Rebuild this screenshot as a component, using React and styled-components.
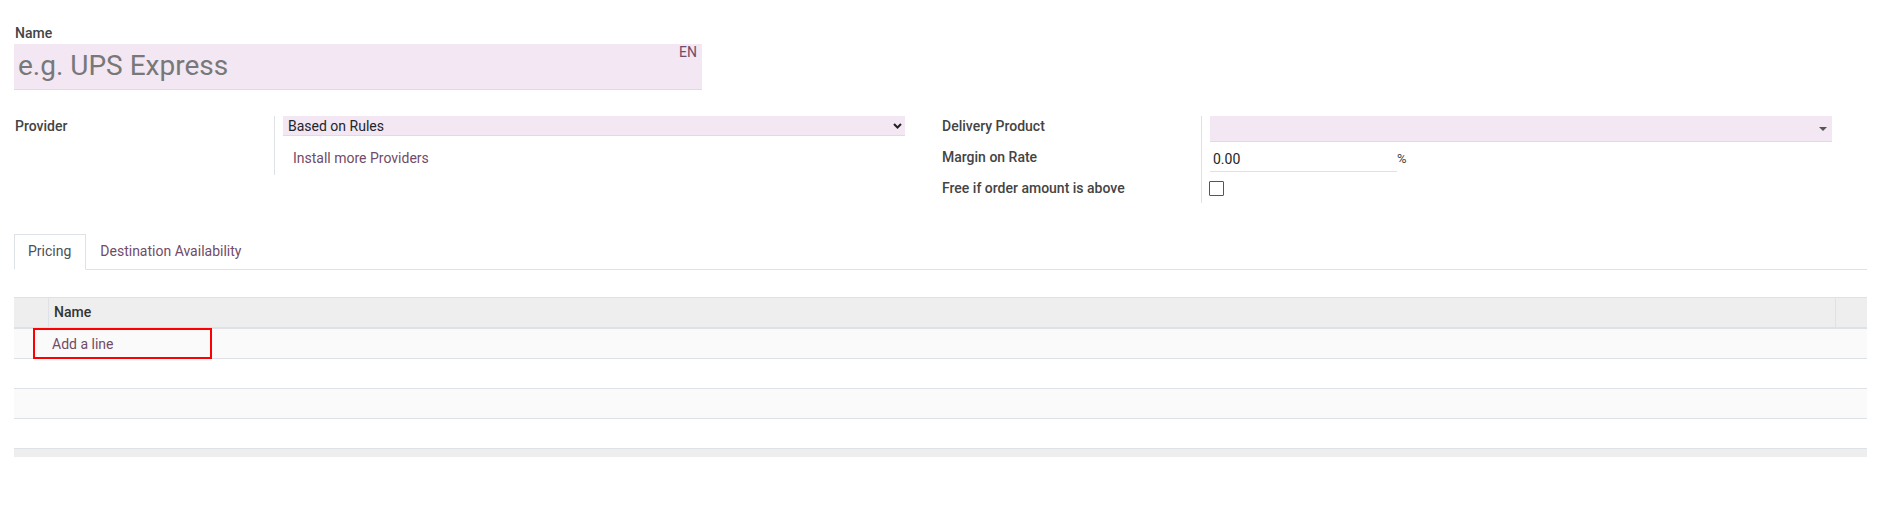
import React from "react";
import styled, { createGlobalStyle } from "styled-components";

const GlobalStyle = createGlobalStyle`
  body {
    margin: 0;
    background: #fff;
    font-family: Roboto, "Noto Sans", sans-serif;
    font-size: 14px;
    color: #212529;
  }
`;

const Sheet = styled.div`
  padding: 23px 15px 40px 14px;
`;

const FieldLabel = styled.div`
  font-weight: 500;
  font-size: 14px;
  line-height: 20px;
  color: #444;
  padding-left: 1px;
  padding-top: ${(p) => p.$top || 0}px;
  margin-bottom: ${(p) => p.$bottom || 0}px;
`;

const TitleField = styled.div`
  position: relative;
  width: 688px;
`;

const TitleInput = styled.input`
  display: block;
  width: 100%;
  height: 46px;
  box-sizing: border-box;
  border: 0;
  border-bottom: 1px solid #dcdde2;
  background: #f2e7f3;
  font-family: Roboto, sans-serif;
  font-size: 28px;
  color: #212529;
  padding: 0 4px 3px;
  outline: none;

  &::placeholder {
    color: #787878;
  }
`;

const LangBadge = styled.span`
  position: absolute;
  top: 1px;
  right: 5px;
  font-size: 14px;
  line-height: 14px;
  color: #714b67;
`;

const Groups = styled.div`
  display: grid;
  grid-template-columns: 927px 927px;
  margin-top: 26px;
  align-items: start;
`;

const Group = styled.div`
  display: grid;
  grid-template-columns: 260px 1fr;
`;

const FieldCell = styled.div`
  border-left: 1px solid #dee2e6;
  padding: 0 0 ${(p) => (p.$bottom === undefined ? 4 : p.$bottom)}px 8px;
  display: flex;
  align-items: ${(p) => p.$align || "center"};
`;

const SelectBox = styled.div`
  display: flex;
  align-items: center;
  width: 622px;
  height: ${(p) => p.$height}px;
  box-sizing: border-box;
  background: #f2e7f3;
  border-bottom: 1px solid #dcdde2;
`;

const NativeSelect = styled.select`
  flex: 1;
  appearance: none;
  border: 0;
  background: transparent;
  height: 100%;
  padding: 0 0 0 5px;
  font-family: Roboto, sans-serif;
  font-size: 14px;
  color: #212529;
  outline: none;
`;

const ComboInput = styled.input`
  flex: 1;
  border: 0;
  background: transparent;
  height: 100%;
  padding: 0 0 0 4px;
  font-family: Roboto, sans-serif;
  font-size: 14px;
  outline: none;
`;

const Chevron = styled.svg`
  margin-right: 3px;
  flex-shrink: 0;
`;

const Caret = styled.span`
  width: 0;
  height: 0;
  margin-right: 5px;
  border-left: 4px solid transparent;
  border-right: 4px solid transparent;
  border-top: 4px solid #555;
`;

const InstallLink = styled.a`
  display: block;
  padding: 8px 0 7px 10px;
  line-height: 20px;
  color: #714b67;
  text-decoration: none;
  cursor: pointer;
`;

const NumberInput = styled.input`
  width: 187px;
  height: 26px;
  box-sizing: border-box;
  border: 0;
  border-bottom: 1px solid #dee2e6;
  background: transparent;
  padding: 0 0 0 3px;
  font-family: Roboto, sans-serif;
  font-size: 14px;
  color: #212529;
  outline: none;
`;

const Unit = styled.span`
  line-height: 20px;
  font-size: 13px;
  color: #444;
`;

const Checkbox = styled.input`
  appearance: none;
  width: 15px;
  height: 15px;
  margin: 5px 0 7px -1px;
  box-sizing: border-box;
  border: 1.5px solid #555;
  border-radius: 1px;
  background: #fff;
  cursor: pointer;
`;

const TabBar = styled.div`
  display: flex;
  margin-top: 31px;
  border-bottom: 1px solid #dee2e6;
`;

const Tab = styled.div`
  padding: 6px 14px 8px 13px;
  line-height: 20px;
  border: 1px solid transparent;
  margin-bottom: -1px;
  cursor: pointer;
  color: ${(p) => (p.$active ? "#495057" : "#714b67")};
  border-color: ${(p) =>
    p.$active ? "#dee2e6 #dee2e6 #fff" : "transparent"};
  background: ${(p) => (p.$active ? "#fff" : "transparent")};
`;

const ListTable = styled.div`
  margin-top: 27px;
`;

const HeaderRow = styled.div`
  display: grid;
  grid-template-columns: 34px 1fr 32px;
  background: #eeeeee;
  border-top: 1px solid #dee2e6;
  border-bottom: 2px solid #dee2e6;
`;

const HeaderCell = styled.div`
  padding: 4px 5px 5px;
  line-height: 20px;
  font-weight: 500;
  color: #333;
  border-left: ${(p) => (p.$sep ? "1px solid #dee2e6" : "0")};
`;

const BodyRow = styled.div`
  position: relative;
  display: grid;
  grid-template-columns: 34px 1fr;
  align-items: center;
  height: 29px;
  border-bottom: 1px solid #dee2e6;
  background: ${(p) => (p.$striped ? "#fafafa" : "#fff")};
`;

const AddLine = styled.a`
  grid-column: 2;
  padding-left: 4px;
  line-height: 20px;
  color: #714b67;
  cursor: pointer;
`;

const Highlight = styled.span`
  position: absolute;
  left: 19px;
  top: -1px;
  width: 179px;
  height: 31px;
  box-sizing: border-box;
  border: 2px solid #ff0000;
  pointer-events: none;
`;

const TableFooter = styled.div`
  height: 8px;
  background: #eeeeee;
`;

export default function App() {
  return (
    <>
      <GlobalStyle />
      <Sheet>
        <FieldLabel $bottom={1}>Name</FieldLabel>
        <TitleField>
          <TitleInput placeholder="e.g. UPS Express" />
          <LangBadge>EN</LangBadge>
        </TitleField>

        <Groups>
          <Group>
            <FieldLabel>Provider</FieldLabel>
            <FieldCell>
              <SelectBox $height={20}>
                <NativeSelect defaultValue="base_on_rule">
                  <option value="fixed">Fixed Price</option>
                  <option value="base_on_rule">Based on Rules</option>
                </NativeSelect>
                <Chevron width="9" height="6" viewBox="0 0 9 6">
                  <polyline
                    points="1,1 4.5,4.5 8,1"
                    fill="none"
                    stroke="#222"
                    strokeWidth="2"
                  />
                </Chevron>
              </SelectBox>
            </FieldCell>
            <div />
            <FieldCell $bottom={0}>
              <InstallLink>Install more Providers</InstallLink>
            </FieldCell>
          </Group>

          <Group>
            <FieldLabel>Delivery Product</FieldLabel>
            <FieldCell>
              <SelectBox $height={26}>
                <ComboInput />
                <Caret />
              </SelectBox>
            </FieldCell>
            <FieldLabel $top={1}>Margin on Rate</FieldLabel>
            <FieldCell>
              <NumberInput defaultValue="0.00" />
              <Unit>%</Unit>
            </FieldCell>
            <FieldLabel $top={2}>Free if order amount is above</FieldLabel>
            <FieldCell $bottom={0} $align="flex-start">
              <Checkbox type="checkbox" />
            </FieldCell>
          </Group>
        </Groups>

        <TabBar>
          <Tab $active>Pricing</Tab>
          <Tab>Destination Availability</Tab>
        </TabBar>

        <ListTable>
          <HeaderRow>
            <HeaderCell />
            <HeaderCell $sep>Name</HeaderCell>
            <HeaderCell $sep />
          </HeaderRow>
          <BodyRow $striped>
            <AddLine>Add a line</AddLine>
            <Highlight />
          </BodyRow>
          <BodyRow />
          <BodyRow $striped />
          <BodyRow />
          <TableFooter />
        </ListTable>
      </Sheet>
    </>
  );
}
